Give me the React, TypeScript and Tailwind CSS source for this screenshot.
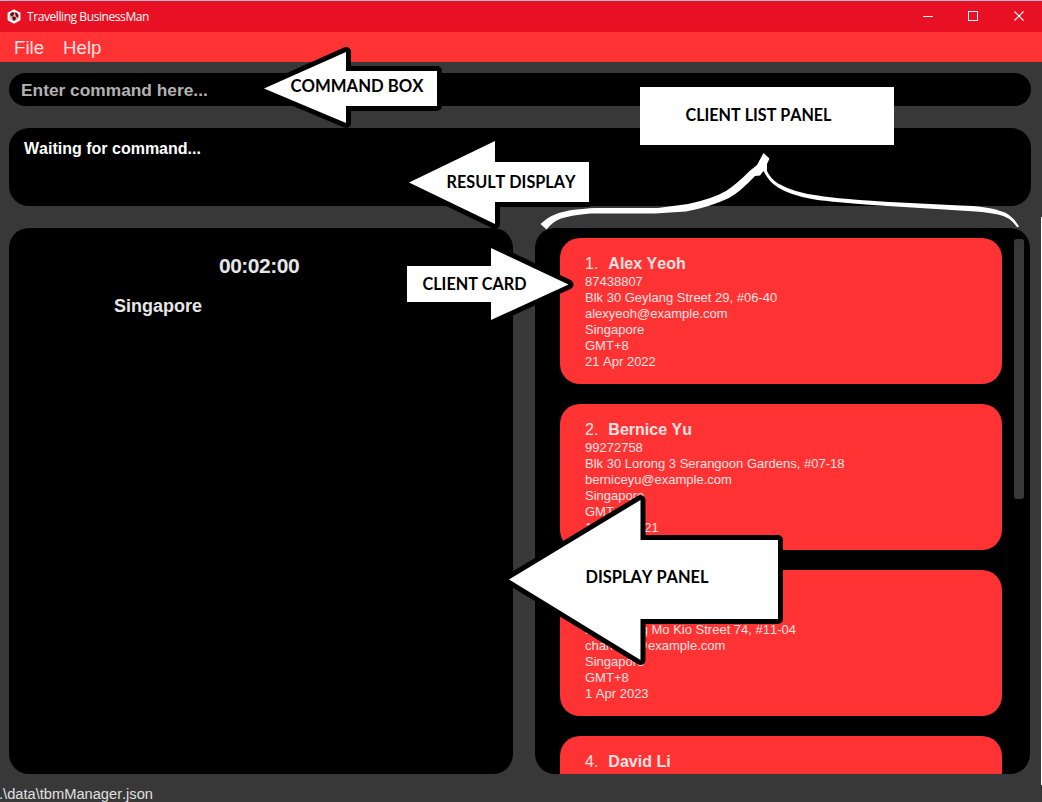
import React from "react";

type Client = {
  name: string;
  details: string[];
};

const clients: Client[] = [
  { name: "Alex Yeoh", details: ["87438807", "Blk 30 Geylang Street 29, #06-40", "alexyeoh@example.com", "Singapore", "GMT+8", "21 Apr 2022"] },
  { name: "Bernice Yu", details: ["99272758", "Blk 30 Lorong 3 Serangoon Gardens, #07-18", "berniceyu@example.com", "Singapore", "GMT+8", "10 Nov 2021"] },
  { name: "Charlotte Oliveiro", details: ["93210283", "Blk 11 Ang Mo Kio Street 74, #11-04", "charlotte@example.com", "Singapore", "GMT+8", "1 Apr 2023"] },
  { name: "David Li", details: [] },
];

function TitleBar() {
  return (
    <header className="flex h-8 shrink-0 items-center border-t border-[#a9b4cf] bg-[#e81123] pl-[7px]">
      <svg className="h-[15px] w-[14px]" viewBox="0 0 14 15">
        <path d="M7 0.3 L13.4 3.8 V11.2 L7 14.7 L0.6 11.2 V3.8 Z" fill="#fff" />
        <circle cx="7" cy="7.4" r="4.7" fill="#e9b9b4" />
        <path d="M2.8 5.4 L5 3.2 L7 3.4 L7.4 5 L5.8 6.8 L4.4 7.4 Z M8.2 3.2 L10.4 4.2 L11.5 6.6 L11 9 L9.4 7.8 L8.4 6 Z M5 7.8 L7.8 7.4 L9.2 9 L8 11.4 L6 11.6 Z" fill="#5e0d10" />
      </svg>
      <h1 className="ml-1.5 font-['Open_Sans',sans-serif] text-[12px] tracking-[-0.42px] text-white">Travelling BusinessMan</h1>
      <div className="ml-auto mr-[17px] flex gap-[35px]">
        <svg className="size-[11px]" viewBox="0 0 11 11" stroke="#fff" fill="none"><path d="M1 5.5H11" /></svg>
        <svg className="size-[11px]" viewBox="0 0 11 11" stroke="#fff" fill="none"><rect x="0.5" y="0.5" width="9" height="9" /></svg>
        <svg className="size-[11px]" viewBox="0 0 11 11" stroke="#fff" strokeWidth="1.2" fill="none"><path d="M0.5 0.5L9.5 9.5M9.5 0.5L0.5 9.5" /></svg>
      </div>
    </header>
  );
}

function ClientCard({ client, index }: { client: Client; index: number }) {
  return (
    <li className="h-[146px] w-[442px] shrink-0 rounded-[20px] bg-[#ff3333] pl-[25px] pt-4 text-[13px] leading-4 text-[#ffe2e2]">
      <div className="flex h-5 items-start gap-[10px] text-base leading-[19px]">
        <span>{index}.</span>
        <strong>{client.name}</strong>
      </div>
      {client.details.map((line) => (
        <p key={line}>{line}</p>
      ))}
    </li>
  );
}

function Annotations() {
  return (
    <svg className="pointer-events-none absolute inset-0 h-full w-full" viewBox="0 0 1042 802">
      <g fill="#fff" stroke="#000" strokeWidth="10" strokeLinejoin="round" style={{ paintOrder: "stroke" }}>
        <path d="M264 88.5 L346 52 V71 H437 V106 H346 V123 Z" />
        <path d="M409 182.5 L495 141 V162 H589 V202 H495 V224 Z" />
        <path d="M568.5 284.5 L491 248 V266 H407 V302 H491 V320 Z" />
        <path d="M509 579.5 L640.5 500 V540 H778 V619 H640.5 V660 Z" />
      </g>
      <rect x="640" y="87" width="254" height="58" fill="#fff" />
      <path
        fill="#fff"
        d="M540.5 224 Q550 214 569 210.5 Q584 208.5 595 208 H658 L688 204 Q712 199 726 191 Q738 183 749 171.5 L757 165 L763.5 153 L769.5 158.5 L767 164 V171 Q770 178 778 183.5 Q795 193 818 195.5 Q838 199 900 202.5 L960 205.5 Q987 206 1000 211 Q1011 213 1019 226.5 L1017.5 227.5 Q1009 216 998 214.5 Q985 211.5 960 210.5 L880 205.5 Q820 201 812 199 Q790 195 778 187.5 Q769 182 763.5 171 L760 175.5 L755 176 Q740 192 729 198 Q710 207 686 211.5 L655 213.5 H590 Q572 215 561 218.5 Q553 221.5 546.5 229.5 Z"
      />
      <g fill="#000" fontFamily="'Lato', 'Noto Sans', sans-serif" fontWeight="700" fontSize="16.5">
        <text x="290.5" y="92" textLength="133" lengthAdjust="spacingAndGlyphs">COMMAND BOX</text>
        <text x="446.5" y="188" textLength="129" lengthAdjust="spacingAndGlyphs">RESULT DISPLAY</text>
        <text x="685.5" y="121" textLength="146" lengthAdjust="spacingAndGlyphs">CLIENT LIST PANEL</text>
        <text x="422.5" y="290" textLength="104" lengthAdjust="spacingAndGlyphs">CLIENT CARD</text>
        <text x="585.5" y="583" textLength="123" lengthAdjust="spacingAndGlyphs">DISPLAY PANEL</text>
      </g>
    </svg>
  );
}

export default function App() {
  return (
    <div className="relative flex h-[802px] w-[1042px] flex-col overflow-hidden bg-[#383838] font-['Liberation_Sans',Arial,sans-serif] [font-kerning:none]">
      <TitleBar />
      <nav className="flex h-[30px] shrink-0 items-center gap-[19px] bg-[#ff3333] pl-[14px] pt-px text-[18.67px] text-[#ffe2e2]">
        <span>File</span>
        <span>Help</span>
      </nav>
      <main className="flex flex-1 flex-col gap-[22px] px-[9px] pt-[11px]">
        <div className="flex h-[33px] w-[1022px] shrink-0 items-center rounded-full bg-black pl-3 pt-[3px] text-[17.33px] font-bold text-[#b2b2b2]">
          Enter command here...
        </div>
        <div className="h-[78px] w-[1022px] shrink-0 rounded-[20px] bg-black pl-[15px] pt-3 text-base leading-[18px] font-bold text-white">
          Waiting for command...
        </div>
        <div className="flex h-[546px] shrink-0 gap-[22px]">
          <section className="w-[504px] rounded-[20px] bg-black pt-[25px] font-bold text-[#e6e6e6]">
            <div className="pl-[210px] text-[21px] leading-[26px] tracking-[-0.5px]">00:02:00</div>
            <div className="pl-[105px] pt-[15px] text-[18px] leading-6">Singapore</div>
          </section>
          <section className="flex w-[495px] overflow-hidden rounded-[20px] bg-black">
            <ul className="flex flex-col gap-5 pl-[25px] pt-[10px]">
              {clients.map((client, i) => (
                <ClientCard key={client.name} client={client} index={i + 1} />
              ))}
            </ul>
            <div className="ml-3 mt-[11px] h-[260px] w-[10px] rounded-[3px] bg-[#383838]" />
          </section>
        </div>
      </main>
      <footer className="-ml-px flex h-[15px] shrink-0 items-center pb-px text-[14.67px] leading-[14px] text-[#e0e0e0]">.\data\tbmManager.json</footer>
      <div className="absolute right-0 top-[217px] h-[568px] w-px bg-white" />
      <Annotations />
    </div>
  );
}
